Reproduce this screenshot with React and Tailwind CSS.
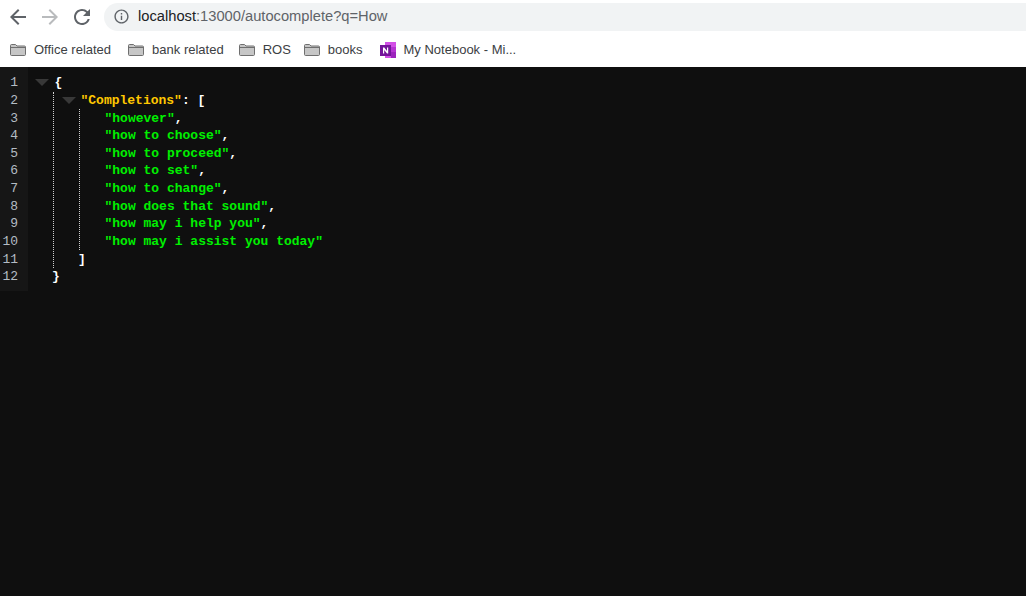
import React from 'react';

const codeFont = { fontFamily: '"Liberation Mono", monospace' };
const uiFont = { fontFamily: '"Liberation Sans", Arial, sans-serif' };

const bookmarks = [
  { label: 'Office related', gap: 'mr-[17px]' },
  { label: 'bank related', gap: 'mr-[15px]' },
  { label: 'ROS', gap: 'mr-[13px]' },
  { label: 'books', gap: 'mr-[17px]' },
];

const completions = [
  'however',
  'how to choose',
  'how to proceed',
  'how to set',
  'how to change',
  'how does that sound',
  'how may i help you',
  'how may i assist you today',
];

function MaterialIcon({ d, className }) {
  return (
    <svg viewBox="0 0 24 24" fill="currentColor" className={className}>
      <path d={d} />
    </svg>
  );
}

function FolderIcon() {
  return (
    <svg viewBox="0 0 16 12" className="h-[12px] w-[16px] shrink-0">
      <path
        d="M0.5 1.5C0.5 0.9 0.9 0.5 1.5 0.5H5.5L7 2H14.5C15.1 2 15.5 2.4 15.5 3V10.5C15.5 11.1 15.1 11.5 14.5 11.5H1.5C0.9 11.5 0.5 11.1 0.5 10.5Z"
        fill="#c6c6c6"
        stroke="#6f6f6f"
      />
      <path d="M0.8 3.5H15.2" stroke="#6f6f6f" />
    </svg>
  );
}

function OneNoteIcon() {
  return (
    <svg viewBox="0 0 16 16" className="h-4 w-4 shrink-0">
      <rect x="5" y="0" width="11" height="16" fill="#d24fe6" />
      <rect x="11" y="5" width="5" height="5" fill="#b634d2" />
      <rect x="11" y="10" width="5" height="6" fill="#9c24bc" />
      <rect x="0" y="3" width="11" height="11" fill="#74149a" />
      <path d="M3 11.5V5.5H4.3L7 9V5.5H8.2V11.5H7L4.2 7.9V11.5Z" fill="#ffffff" />
    </svg>
  );
}

function FoldArrow() {
  return <div className="h-0 w-0 border-x-[7px] border-t-[7px] border-x-transparent border-t-[#383838]" />;
}

function Line({ children, className = '' }) {
  return <div className={`flex h-[17.64px] items-center whitespace-pre ${className}`}>{children}</div>;
}

export default function App() {
  return (
    <div className="flex h-[596px] w-[1026px] flex-col overflow-hidden bg-white" style={uiFont}>
      <div className="h-[67px] shrink-0">
        <div className="flex h-[33px] items-center pl-[6px]">
          <MaterialIcon d="M20 11H7.83l5.59-5.59L12 4l-8 8 8 8 1.41-1.41L7.83 13H20v-2z" className="h-6 w-6 text-[#5f6368]" />
          <MaterialIcon d="M20 11H7.83l5.59-5.59L12 4l-8 8 8 8 1.41-1.41L7.83 13H20v-2z" className="ml-[8px] h-6 w-6 rotate-180 text-[#b9bbbd]" />
          <MaterialIcon d="M17.65 6.35A7.958 7.958 0 0 0 12 4c-4.42 0-7.99 3.58-7.99 8s3.57 8 7.99 8c3.73 0 6.84-2.55 7.73-6h-2.08A5.99 5.99 0 0 1 12 18c-3.31 0-6-2.69-6-6s2.69-6 6-6c1.66 0 3.14.69 4.22 1.78L13 11h7V4l-2.35 2.35z" className="ml-[8px] h-6 w-6 text-[#5f6368]" />
          <div className="ml-[10px] flex h-[28px] flex-1 items-center rounded-l-full bg-[#f1f3f4] pl-[9px] text-[14.7px]">
            <MaterialIcon d="M11 7h2v2h-2zm0 4h2v6h-2zm1-9C6.48 2 2 6.48 2 12s4.48 10 10 10 10-4.48 10-10S17.52 2 12 2zm0 18c-4.41 0-8-3.59-8-8s3.59-8 8-8 8 3.59 8 8-3.59 8-8 8z" className="h-[17px] w-[17px] text-[#5f6368]" />
            <span className="ml-[8px] text-[#202124]">localhost</span>
            <span className="text-[#5f6368]">:13000/autocomplete?q=How</span>
          </div>
        </div>
        <div className="flex h-[33px] items-center pl-[10px] pt-[1px] text-[13px] text-[#3c4043]">
          {bookmarks.map((b) => (
            <div key={b.label} className={`flex items-center gap-[8px] ${b.gap}`}>
              <FolderIcon />
              <span>{b.label}</span>
            </div>
          ))}
          <div className="flex items-center gap-[8px]">
            <OneNoteIcon />
            <span>My Notebook - Mi...</span>
          </div>
        </div>
      </div>

      <div className="flex flex-1 items-start bg-[#0f0f0f] text-[13px] leading-none" style={codeFont}>
        <div className="w-[28px] bg-[#161616] pb-[5px] pr-[10px] pt-[7px] text-right text-[#b4bcc4]">
          {Array.from({ length: 12 }, (_, i) => (
            <div key={i} className="flex h-[17.64px] items-center justify-end">{i + 1}</div>
          ))}
        </div>

        <div className="pl-[7px] pt-[7px] font-bold text-white">
          <Line>
            <FoldArrow />
            <span className="ml-[5.5px]">{'{'}</span>
          </Line>
          <div className="ml-[18px] border-l border-dotted border-[#d0d0d0]">
            <Line className="pl-[8px]">
              <FoldArrow />
              <span className="ml-[4.5px] text-[#ffc800]">"Completions"</span>
              <span>: [</span>
            </Line>
            <div className="ml-[25px] border-l border-dotted border-[#d0d0d0] pl-[24.5px]">
              {completions.map((text, i) => (
                <Line key={text}>
                  <span className="text-[#00f000]">"{text}"</span>
                  {i < completions.length - 1 && <span>,</span>}
                </Line>
              ))}
            </div>
            <Line className="pl-[24px]">]</Line>
          </div>
          <Line>
            <span className="ml-[17px]">{'}'}</span>
          </Line>
        </div>
      </div>
    </div>
  );
}
